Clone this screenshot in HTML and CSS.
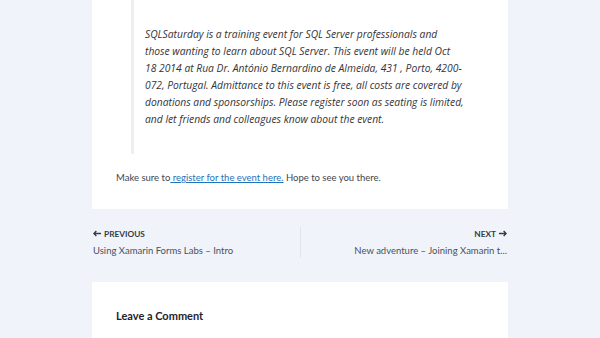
FILE: index.html
```html
<!DOCTYPE html>
<html>
<head>
<meta charset="utf-8">
<link rel="stylesheet" href="styles.css">
</head>
<body>
<div class="container">
  <article class="card post">
    <blockquote class="quote">
      <p>SQLSaturday is a training event for SQL Server professionals and<br>
      those wanting to learn about SQL Server. This event will be held Oct<br>
      18 2014 at Rua Dr. António Bernardino de Almeida, 431 , Porto, 4200-<br>072, Portugal. Admittance to this event is free, all costs are covered by<br>
      donations and sponsorships. Please register soon as seating is limited,<br>
      and let friends and colleagues know about the event.</p>
    </blockquote>
    <p class="text">Make sure to<a href="#"> register for the event here.</a> Hope to see you there.</p>
  </article>
  <nav class="post-nav">
    <div class="nav-item prev">
      <span class="nav-label"><svg class="arrow" viewBox="0 0 10 8" width="8" height="7"><path d="M10 4H1.5M4.2 1L1.2 4l3 3" fill="none" stroke="currentColor" stroke-width="1.7"/></svg>Previous</span>
      <span class="nav-title">Using Xamarin Forms Labs – Intro</span>
    </div>
    <div class="nav-item next">
      <span class="nav-label">Next<svg class="arrow" viewBox="0 0 10 8" width="8" height="7"><path d="M0 4h8.5M5.8 1l3 3-3 3" fill="none" stroke="currentColor" stroke-width="1.7"/></svg></span>
      <span class="nav-title">New adventure – Joining Xamarin t...</span>
    </div>
  </nav>
  <section class="card comments">
    <h3 class="comments-title">Leave a Comment</h3>
  </section>
</div>
</body>
</html>
```
FILE: styles.css
```css
html, body {
  margin: 0;
  padding: 0;
}
body {
  background: #f0f4fa;
  font-family: Lato, "Noto Sans", sans-serif;
  color: #45454e;
  font-size: 9.5px;
  height: 338px;
  overflow: hidden;
}
.container {
  width: 416px;
  margin: 0 auto;
}
.card {
  background: #ffffff;
}
.post {
  padding: 0 24px 22.5px;
}
.quote {
  margin: 0 0 15px 15px;
  padding: 25.5px 0 26.5px 11px;
  border-left: 3px solid #eceef1;
}
.quote p {
  margin: 0;
  font-family: "Open Sans", Lato, sans-serif;
  font-style: italic;
  font-size: 10.3px;
  line-height: 17px;
  color: #34343a;
  white-space: nowrap;
}
.text {
  margin: 0;
  line-height: 17px;
}
.text a {
  color: #1e73be;
  text-decoration: underline;
}
.post-nav {
  display: flex;
  justify-content: space-between;
  padding: 18px 1px 24px;
}
.nav-item {
  display: flex;
  flex-direction: column;
  gap: 3px;
  flex: 1;
}
.nav-item.next {
  align-items: flex-end;
  border-left: 1px solid #e1e5ec;
}
.nav-label {
  display: flex;
  align-items: center;
  gap: 3px;
  text-transform: uppercase;
  font-weight: 700;
  font-size: 8.3px;
  line-height: 14px;
  color: #363b45;
}
.nav-title {
  font-size: 9.5px;
  line-height: 14px;
  color: #4b505a;
}
.comments {
  padding: 26px 24px 20px;
}
.comments-title {
  margin: 0;
  font-size: 11px;
  line-height: 16px;
  font-weight: 700;
  color: #1f232c;
}
```
